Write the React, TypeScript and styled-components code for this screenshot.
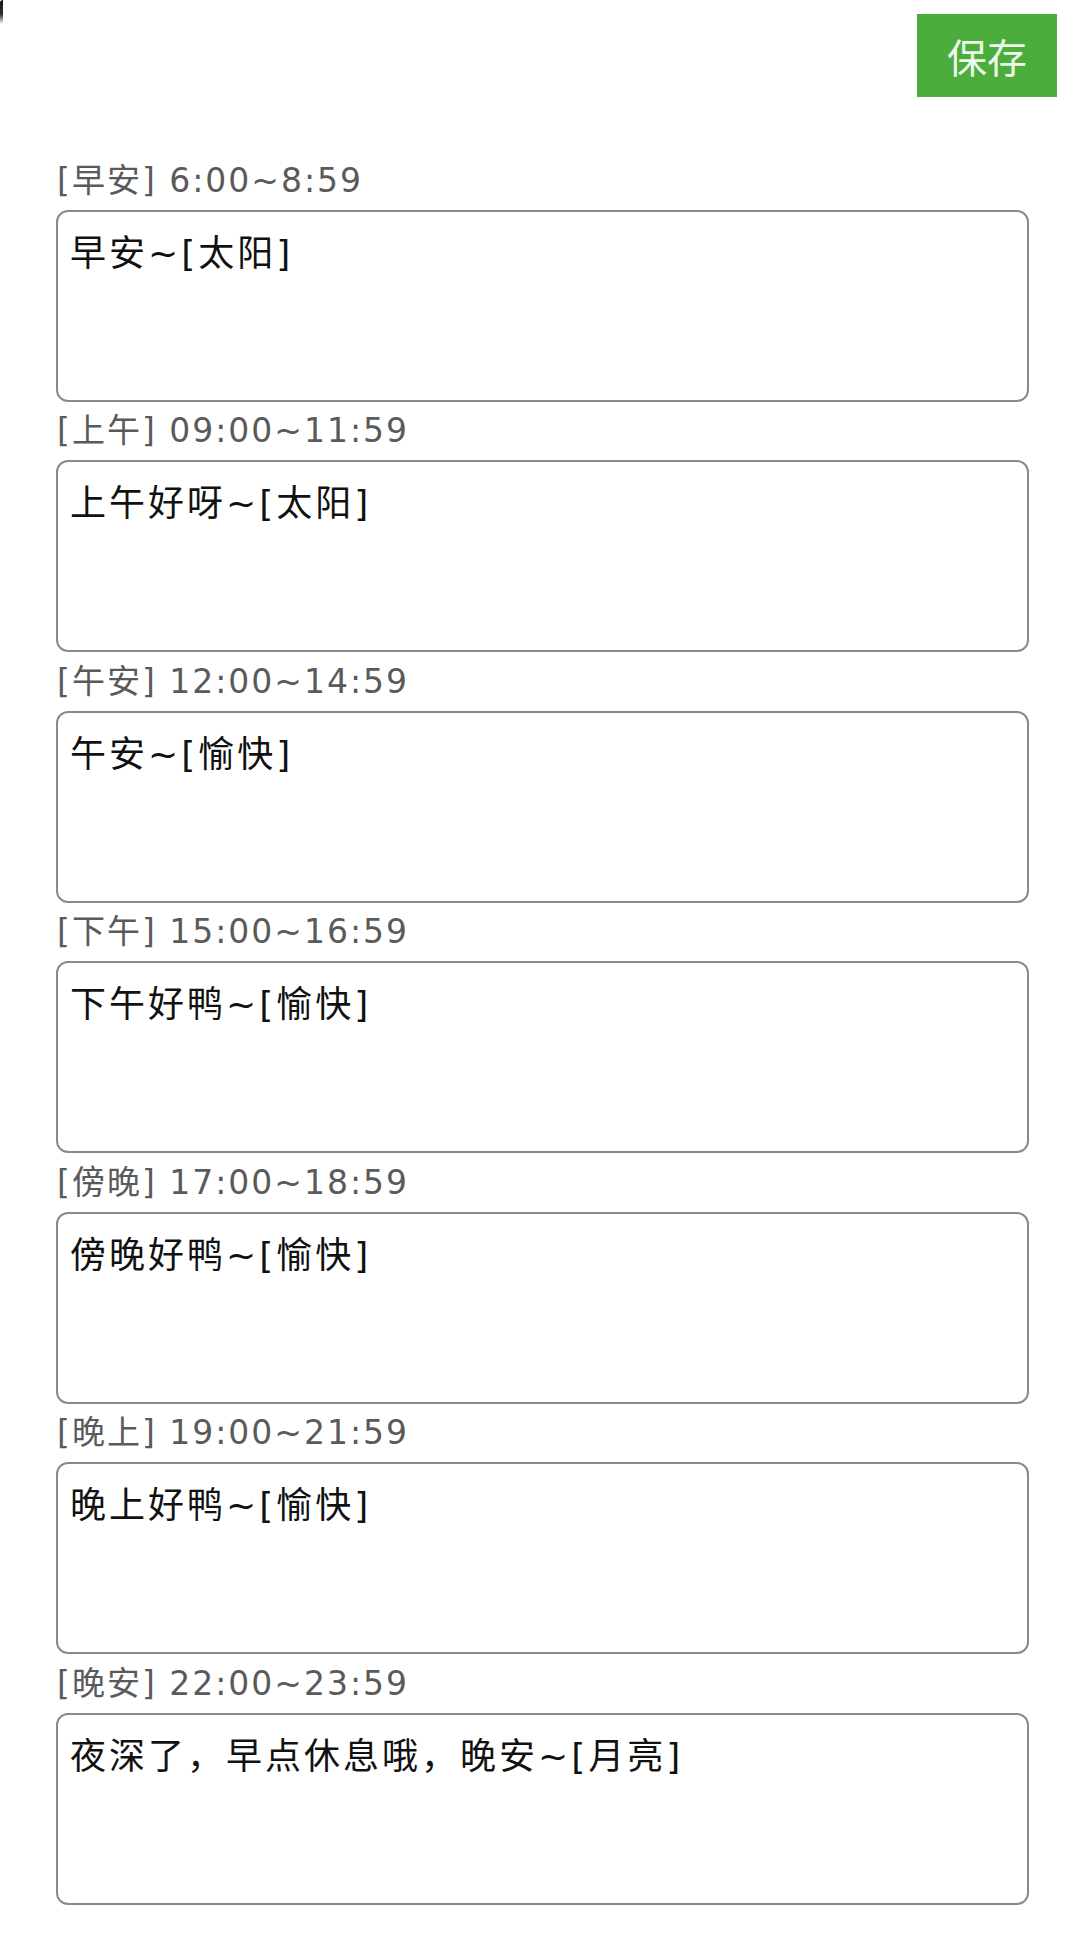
import React from "react";
import styled, { createGlobalStyle } from "styled-components";

const GlobalStyle = createGlobalStyle`
  html, body {
    margin: 0;
    padding: 0;
    background: #ffffff;
  }
  body {
    font-family: "DejaVu Sans", "Noto Sans CJK SC", sans-serif;
  }
  * { box-sizing: border-box; }
`;

const Page = styled.div`
  position: relative;
  width: 1080px;
  min-height: 1938px;
  background: #ffffff;
  padding-bottom: 33px;
`;

const CornerMark = styled.span`
  position: absolute;
  left: 0;
  top: 0;
  width: 3px;
  height: 24px;
  border-top-left-radius: 3px;
  background: linear-gradient(180deg, #111 0%, #333 60%, rgba(0, 0, 0, 0) 100%);
`;

const Header = styled.header`
  display: flex;
  justify-content: flex-end;
  padding: 14px 23px 54px 0;
`;

const SaveButton = styled.button`
  width: 140px;
  height: 83px;
  border: none;
  border-radius: 0;
  background: #4bad3b;
  color: #eef8ea;
  font-family: "Noto Sans CJK SC", sans-serif;
  font-size: 40px;
  font-weight: 400;
  letter-spacing: 0;
  display: flex;
  align-items: center;
  justify-content: center;
  padding: 0;
  cursor: pointer;
`;

const List = styled.main`
  display: flex;
  flex-direction: column;
  padding: 0 51px 0 56px;
`;

const Section = styled.section`
  display: flex;
  flex-direction: column;
  padding-top: 5.5px;
`;

const Label = styled.label`
  display: block;
  height: 48px;
  line-height: 48px;
  margin: 0 0 5px 1px;
  font-family: "DejaVu Sans", "Noto Sans CJK SC", sans-serif;
  font-size: 33px;
  letter-spacing: 2px;
  color: #5a5a5a;
  white-space: nowrap;
`;

const Message = styled.textarea`
  display: block;
  width: 100%;
  height: 192px;
  margin: 0;
  padding: 18px 12px;
  border: 2px solid #8a8a8a;
  border-radius: 12px;
  background: #ffffff;
  color: #111111;
  font-family: "DejaVu Sans", "Noto Sans CJK SC", sans-serif;
  font-size: 36px;
  line-height: 48px;
  letter-spacing: 3px;
  resize: none;
  outline: none;
  overflow: hidden;
`;

type Slot = { name: string; range: string; text: string };

const slots: Slot[] = [
  { name: "早安", range: "6:00~8:59", text: "早安~[太阳]" },
  { name: "上午", range: "09:00~11:59", text: "上午好呀~[太阳]" },
  { name: "午安", range: "12:00~14:59", text: "午安~[愉快]" },
  { name: "下午", range: "15:00~16:59", text: "下午好鸭~[愉快]" },
  { name: "傍晚", range: "17:00~18:59", text: "傍晚好鸭~[愉快]" },
  { name: "晚上", range: "19:00~21:59", text: "晚上好鸭~[愉快]" },
  { name: "晚安", range: "22:00~23:59", text: "夜深了，早点休息哦，晚安~[月亮]" },
];

export default function App() {
  return (
    <>
      <GlobalStyle />
      <Page>
        <CornerMark />
        <Header>
          <SaveButton type="button">保存</SaveButton>
        </Header>
        <List>
          {slots.map((s, i) => (
            <Section key={s.name}>
              <Label htmlFor={`slot-${i}`}>
                [{s.name}] {s.range}
              </Label>
              <Message id={`slot-${i}`} defaultValue={s.text} />
            </Section>
          ))}
        </List>
      </Page>
    </>
  );
}
